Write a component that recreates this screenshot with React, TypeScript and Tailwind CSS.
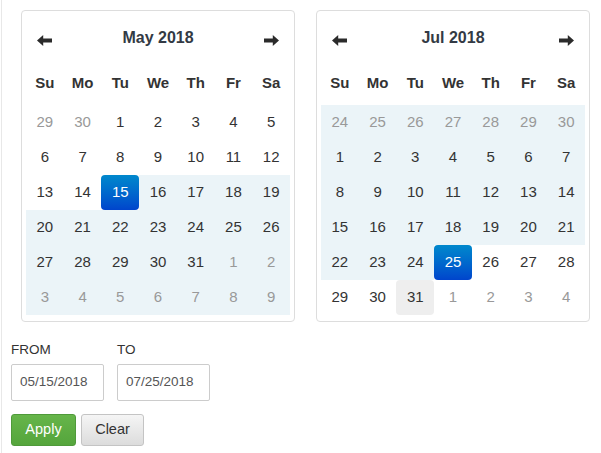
import React from "react";

type Cell = { d: number; off?: boolean; range?: boolean; sel?: boolean; hover?: boolean };

const Arrow = ({ dir }: { dir: "l" | "r" }) => (
  <svg width="15" height="11" viewBox="0 0 15 11" className={dir === "r" ? "rotate-180" : ""}>
    <path d="M0 5.5 L6.2 0 L6.2 3.6 L15 3.6 L15 7.4 L6.2 7.4 L6.2 11 Z" fill="#2b2b2b" />
  </svg>
);

const WEEK = ["Su", "Mo", "Tu", "We", "Th", "Fr", "Sa"];

function Calendar({ title, cells }: { title: string; cells: Cell[] }) {
  return (
    <div className="w-[274px] border border-[#dddddd] rounded-[4px] px-[4px] pt-[4px] pb-[6px] bg-white">
      <div className="grid grid-cols-7 h-[46px] items-center">
        <div className="flex justify-center pt-[5px]">
          <Arrow dir="l" />
        </div>
        <div className="col-span-5 text-center font-bold text-[16px] text-[#333a44]">{title}</div>
        <div className="flex justify-center pt-[5px]">
          <Arrow dir="r" />
        </div>
      </div>
      <div className="grid grid-cols-7 h-[44px] items-center">
        {WEEK.map((w) => (
          <div key={w} className="text-center font-bold text-[15px] text-[#333]">
            {w}
          </div>
        ))}
      </div>
      <div className="grid grid-cols-7">
        {cells.map((c, i) => {
          let cls = "h-[35px] flex items-center justify-center text-[15px] ";
          if (c.sel) cls += "rounded-[4px] text-white bg-gradient-to-b from-[#0088cc] to-[#0044cc]";
          else if (c.hover) cls += "rounded-[4px] bg-[#eeeeee] text-[#333]";
          else {
            if (c.range) cls += "bg-[#ebf4f8] ";
            cls += c.off ? "text-[#999]" : "text-[#333]";
          }
          return (
            <div key={i} className={cls}>
              {c.d}
            </div>
          );
        })}
      </div>
    </div>
  );
}

function may(): Cell[] {
  const out: Cell[] = [];
  out.push({ d: 29, off: true }, { d: 30, off: true });
  for (let d = 1; d <= 31; d++) out.push({ d, range: d > 15, sel: d === 15 });
  for (let d = 1; d <= 9; d++) out.push({ d, off: true, range: true });
  return out;
}

function jul(): Cell[] {
  const out: Cell[] = [];
  for (let d = 24; d <= 30; d++) out.push({ d, off: true, range: true });
  for (let d = 1; d <= 31; d++) out.push({ d, range: d < 25, sel: d === 25, hover: d === 31 });
  for (let d = 1; d <= 4; d++) out.push({ d, off: true });
  return out;
}

export default function App() {
  return (
    <div className="w-[600px] h-[453px] ml-px border-l border-[#e8e8e8] bg-white font-['Liberation_Sans',Arial,sans-serif] pl-[9px] pt-[10px]">
      <div className="flex gap-[21px] ml-[10px]">
        <Calendar title="May 2018" cells={may()} />
        <Calendar title="Jul 2018" cells={jul()} />
      </div>
      <div className="mt-[18px] flex gap-[13px]">
        <div className="flex flex-col">
          <div className="text-[13.5px] leading-[20px] text-[#333] mb-[4px]">FROM</div>
          <div className="w-[93px] h-[37px] border border-[#cccccc] rounded-[2px] flex items-center pl-[8px] text-[13.5px] text-[#555]">
            05/15/2018
          </div>
        </div>
        <div className="flex flex-col">
          <div className="text-[13.5px] leading-[20px] text-[#333] mb-[4px]">TO</div>
          <div className="w-[93px] h-[37px] border border-[#cccccc] rounded-[2px] flex items-center pl-[8px] text-[13.5px] text-[#555]">
            07/25/2018
          </div>
        </div>
      </div>
      <div className="mt-[13px] flex gap-[5px]">
        <div className="w-[65px] h-[32px] rounded-[3px] border border-[#4f9a3a] bg-gradient-to-b from-[#66b54a] to-[#55a53c] text-white text-[14.5px] flex items-center justify-center">
          Apply
        </div>
        <div className="w-[63px] h-[32px] rounded-[3px] border border-[#c4c4c4] bg-gradient-to-b from-[#f5f5f5] to-[#dcdcdc] text-[#333] text-[14.5px] flex items-center justify-center">
          Clear
        </div>
      </div>
    </div>
  );
}
